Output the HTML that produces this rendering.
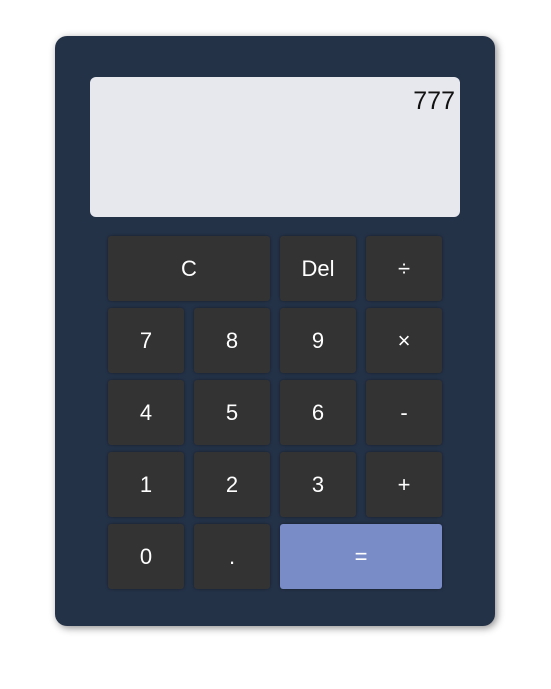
<!DOCTYPE html><html><head><style>
body{margin:0;width:551px;height:689px;background:#fff;font-family:"Liberation Sans",sans-serif;position:relative}
.calc{position:absolute;left:55px;top:36px;width:440px;height:590px;background:#243248;border-radius:12px;box-shadow:2px 2px 8px rgba(0,0,0,.45)}
.disp{position:absolute;left:35px;top:41px;width:370px;height:140px;background:#e7e8ed;border-radius:6px;box-sizing:border-box;text-align:right;font-size:25px;padding:10px 5px 0 0;color:#111}
.b{position:absolute;width:76px;height:65px;background:#333;border-radius:3px;color:#fff;font-size:22px;display:flex;align-items:center;justify-content:center;box-shadow:0 0 3px rgba(0,0,0,.4)}
</style></head><body><div class="calc">
<div class="disp">777</div>
<div class="b" style="left:53px;top:200px;width:162px">C</div>
<div class="b" style="left:225px;top:200px">Del</div>
<div class="b" style="left:311px;top:200px">÷</div>
<div class="b" style="left:53px;top:272px">7</div>
<div class="b" style="left:139px;top:272px">8</div>
<div class="b" style="left:225px;top:272px">9</div>
<div class="b" style="left:311px;top:272px">×</div>
<div class="b" style="left:53px;top:344px">4</div>
<div class="b" style="left:139px;top:344px">5</div>
<div class="b" style="left:225px;top:344px">6</div>
<div class="b" style="left:311px;top:344px">-</div>
<div class="b" style="left:53px;top:416px">1</div>
<div class="b" style="left:139px;top:416px">2</div>
<div class="b" style="left:225px;top:416px">3</div>
<div class="b" style="left:311px;top:416px">+</div>
<div class="b" style="left:53px;top:488px">0</div>
<div class="b" style="left:139px;top:488px">.</div>
<div class="b" style="left:225px;top:488px;width:162px;background:#7a8cc7">=</div>
</div></body></html>
